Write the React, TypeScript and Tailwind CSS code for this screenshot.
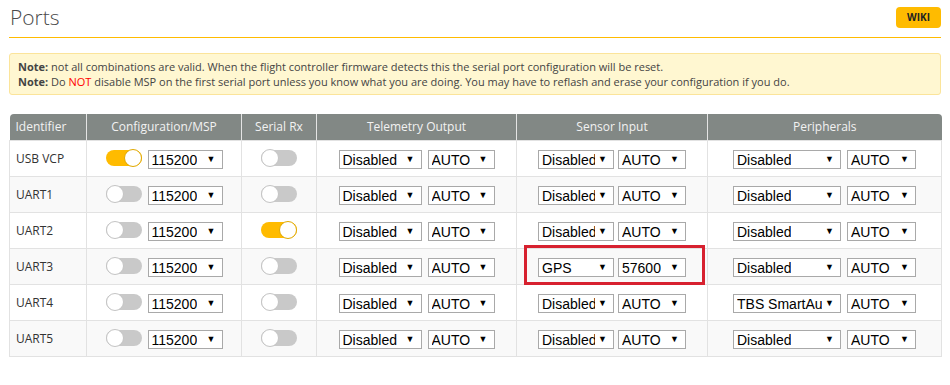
type Row = {
  id: string;
  msp: boolean;
  rx: boolean;
  sensor: [string, string];
  periph: string;
  highlight?: boolean;
};

const rows: Row[] = [
  { id: 'USB VCP', msp: true, rx: false, sensor: ['Disabled', 'AUTO'], periph: 'Disabled' },
  { id: 'UART1', msp: false, rx: false, sensor: ['Disabled', 'AUTO'], periph: 'Disabled' },
  { id: 'UART2', msp: false, rx: true, sensor: ['Disabled', 'AUTO'], periph: 'Disabled' },
  { id: 'UART3', msp: false, rx: false, sensor: ['GPS', '57600'], periph: 'Disabled', highlight: true },
  { id: 'UART4', msp: false, rx: false, sensor: ['Disabled', 'AUTO'], periph: 'TBS SmartAudio' },
  { id: 'UART5', msp: false, rx: false, sensor: ['Disabled', 'AUTO'], periph: 'Disabled' },
];

function Toggle({ on }: { on: boolean }) {
  return (
    <div className={`relative h-[16px] w-[36px] shrink-0 rounded-full ${on ? 'bg-[#ffbb00]' : 'bg-[#c9c9c9]'}`}>
      <div
        className={`absolute top-[-1px] h-[18px] w-[18px] rounded-full border bg-white ${on ? 'right-0 border-[#e0a800]' : 'left-0 border-[#c4c4c4]'}`}
      />
    </div>
  );
}

function Select({ value, width }: { value: string; width: string }) {
  return (
    <div
      className={`mt-[2px] flex h-[19px] shrink-0 items-center justify-between overflow-hidden border border-[#a9a9a9] bg-white pt-[1px] pl-[3px] pr-[6px] font-['Liberation_Sans',Arial,sans-serif] text-[14px] leading-none text-black ${width}`}
    >
      <span className="min-w-0 overflow-hidden whitespace-nowrap">{value}</span>
      <span className="ml-[3px] shrink-0 text-[9px]">▼</span>
    </div>
  );
}

export default function App() {
  return (
    <div className="h-[385px] w-[950px] bg-white px-[9px] font-['Open_Sans',sans-serif] text-[#333]">
      <div className="flex items-center justify-between border-b border-[#ffbb00] pl-[1px] pt-[3px] pb-[6px]">
        <h1 className="text-[21px] font-light leading-[28px] text-[#4a4a4a]">Ports</h1>
        <button className="rounded-[4px] bg-[#ffbb00] px-[11px] py-[5px] text-[10px] font-bold leading-[11px] text-[#222]">
          WIKI
        </button>
      </div>

      <div className="mt-[15px] rounded-[3px] border border-[#fbe49a] bg-[#fff7d1] px-[8px] py-[5px] text-[11px] leading-[15px] text-[#444]">
        <p>
          <strong>Note:</strong> not all combinations are valid. When the flight controller firmware detects this the
          serial port configuration will be reset.
        </p>
        <p>
          <strong>Note:</strong> Do <span className="text-[#ff0000]">NOT</span> disable MSP on the first serial port
          unless you know what you are doing. You may have to reflash and erase your configuration if you do.
        </p>
      </div>

      <table className="mt-[19px] w-[932px] table-fixed border-collapse text-[12px]">
        <colgroup>
          <col className="w-[77px]" />
          <col className="w-[155px]" />
          <col className="w-[75px]" />
          <col className="w-[200px]" />
          <col className="w-[191px]" />
          <col className="w-[234px]" />
        </colgroup>
        <thead>
          <tr className="h-[26px] bg-[#828885] text-[12px] text-[#f2f2f2]">
            <th className="rounded-tl-[4px] border-r border-[#e4e4e4] pl-[6px] text-left font-normal">Identifier</th>
            <th className="border-r border-[#e4e4e4] font-normal">Configuration/MSP</th>
            <th className="border-r border-[#e4e4e4] font-normal">Serial Rx</th>
            <th className="border-r border-[#e4e4e4] font-normal">Telemetry Output</th>
            <th className="border-r border-[#e4e4e4] font-normal">Sensor Input</th>
            <th className="rounded-tr-[4px] font-normal">Peripherals</th>
          </tr>
        </thead>
        <tbody>
          {rows.map((r, i) => (
            <tr key={r.id} className={`h-[36px] ${i % 2 === 1 ? 'bg-[#f9f9f9]' : 'bg-white'}`}>
              <td className="border border-[#e2e2e2] pl-[6px] pt-[2px]">{r.id}</td>
              <td className="border border-[#e2e2e2]">
                <div className="flex items-center justify-center gap-[6px]">
                  <Toggle on={r.msp} />
                  <Select value="115200" width="w-[75px]" />
                </div>
              </td>
              <td className="border border-[#e2e2e2]">
                <div className="flex justify-center">
                  <Toggle on={r.rx} />
                </div>
              </td>
              <td className="border border-[#e2e2e2]">
                <div className="flex items-center justify-center gap-[6px]">
                  <Select value="Disabled" width="w-[83px]" />
                  <Select value="AUTO" width="w-[67px]" />
                </div>
              </td>
              <td className="relative border border-[#e2e2e2]">
                <div className="flex items-center justify-center gap-[4px]">
                  <Select value={r.sensor[0]} width="w-[76px]" />
                  <Select value={r.sensor[1]} width="w-[68px]" />
                </div>
                {r.highlight && (
                  <div className="absolute top-[-4px] bottom-[-1px] left-[7px] right-[2px] border-[3px] border-[#d7212f]" />
                )}
              </td>
              <td className="border border-[#e2e2e2]">
                <div className="flex items-center justify-center gap-[6px]">
                  <Select value={r.periph} width="w-[108px]" />
                  <Select value="AUTO" width="w-[69px]" />
                </div>
              </td>
            </tr>
          ))}
        </tbody>
      </table>
    </div>
  );
}
